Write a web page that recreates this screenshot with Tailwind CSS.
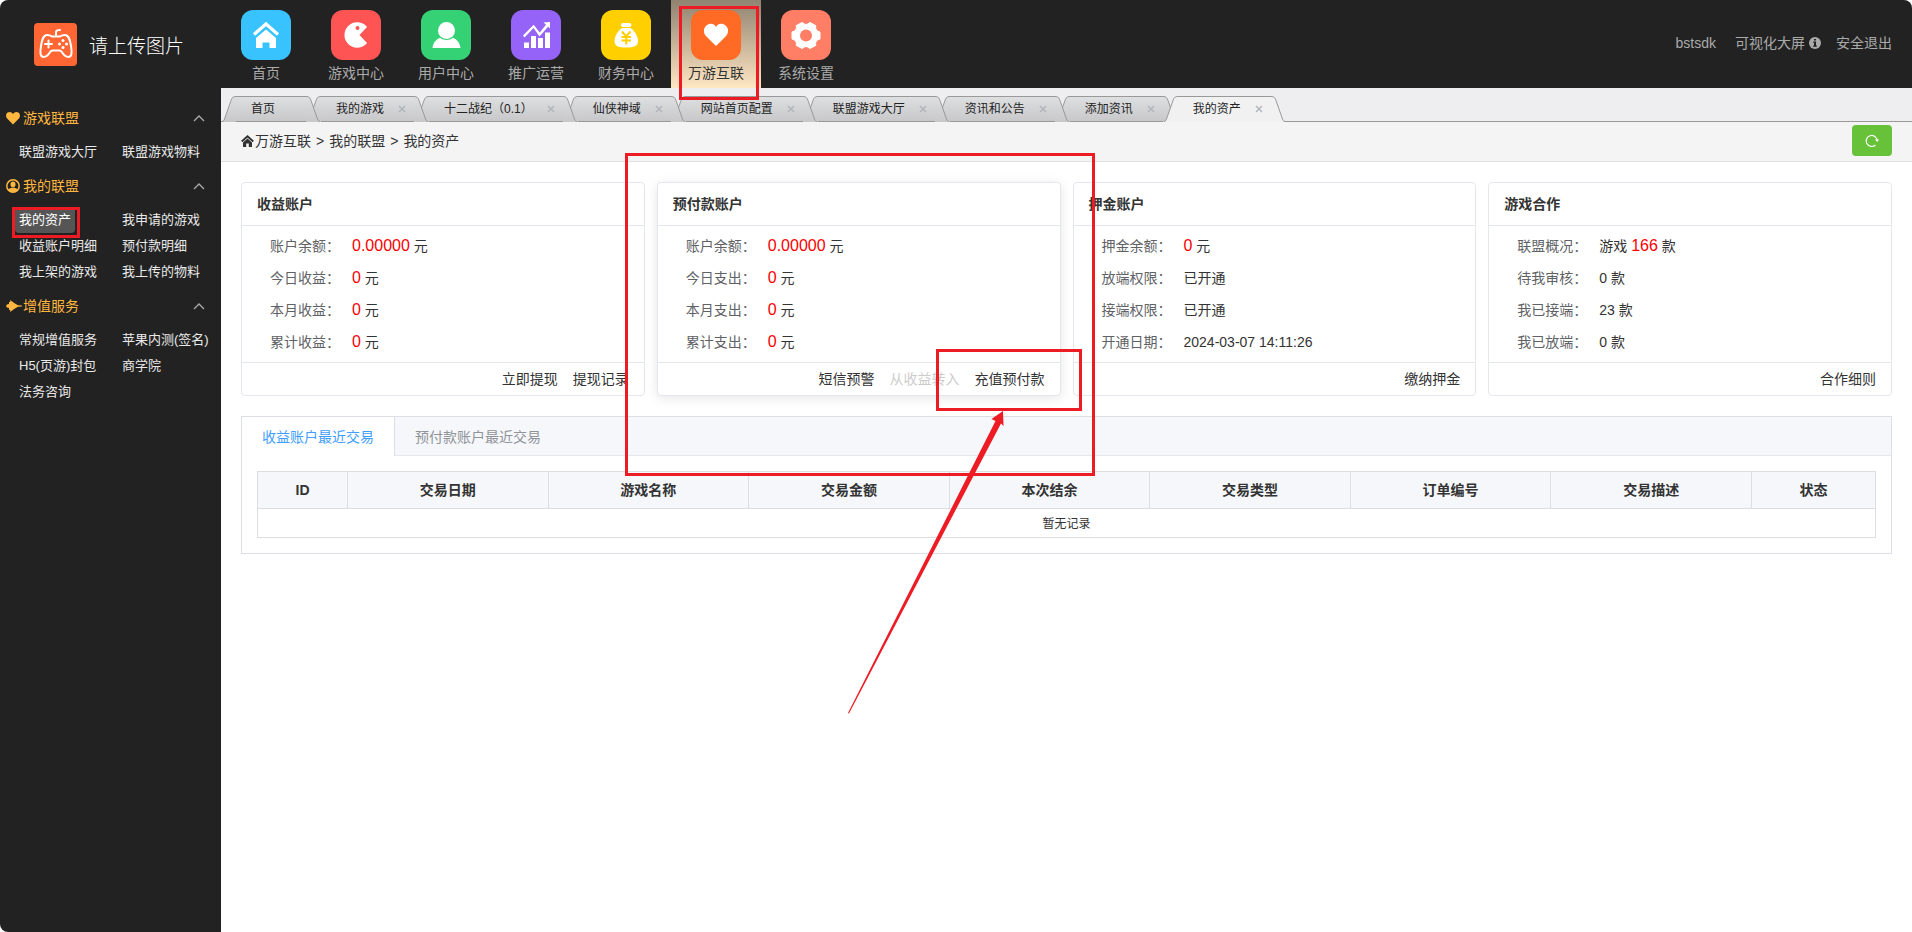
<!DOCTYPE html>
<html lang="zh-CN">
<head>
<meta charset="utf-8">
<meta name="viewport" content="width=device-width, initial-scale=1">
<title>我的资产</title>
<script src="https://cdn.jsdelivr.net/npm/@tailwindcss/browser@4"></script>
</head>
<body class="bg-white font-['Liberation_Sans','Noto_Sans_CJK_SC',sans-serif] text-sm text-[#333]">

<svg class="hidden" aria-hidden="true">
  <symbol id="edge-l" viewBox="0 0 14 26">
    <path d="M0 26 C1.5 25.5 2 24.5 2.5 23 L9 4.5 C10 1.5 11 .5 14 .5 V26Z" fill="url(#tabfill)"/>
    <path d="M0 25.5 C1.500 25 2 24.500 2.500 23 L9 4.500 C10 1.500 11 .5 14 .5" fill="none" stroke="#999"/>
  </symbol>
  <symbol id="edge-r" viewBox="0 0 14 26">
    <path d="M0 .5 C3 .5 4 1.500 5 4.500 L11.500 23 C12 24.500 12.500 25.500 14 26 H0Z" fill="url(#tabfill)"/>
    <path d="M0 .5 C3 .5 4 1.500 5 4.500 L11.500 23 C12 24.500 12.500 25 14 25.500" fill="none" stroke="#999"/>
  </symbol>
  <symbol id="edge-la" viewBox="0 0 14 26">
    <path d="M0 26 C1.500 25.500 2 24.500 2.500 23 L9 4.500 C10 1.500 11 .5 14 .5 V26Z" fill="#f1f1f2"/>
    <path d="M0 25.500 C1.500 25 2 24.500 2.500 23 L9 4.500 C10 1.500 11 .5 14 .5" fill="none" stroke="#999"/>
  </symbol>
  <symbol id="edge-ra" viewBox="0 0 14 26">
    <path d="M0 .5 C3 .5 4 1.500 5 4.500 L11.500 23 C12 24.500 12.500 25.500 14 26 H0Z" fill="#f1f1f2"/>
    <path d="M0 .5 C3 .5 4 1.500 5 4.500 L11.500 23 C12 24.500 12.500 25 14 25.500" fill="none" stroke="#999"/>
  </symbol>
  <symbol id="cross" viewBox="0 0 8 8"><path d="M1 1 L7 7 M7 1 L1 7" fill="none" stroke="#aeb4b9" stroke-width="1.4"/></symbol>
  <symbol id="chev" viewBox="0 0 12 8"><path d="M1 7 L6 2 L11 7" fill="none" stroke="#aaa" stroke-width="1.3"/></symbol>
</svg>
<svg class="absolute size-0" aria-hidden="true">
  <defs><linearGradient id="tabfill" gradientUnits="userSpaceOnUse" x1="0" y1="0" x2="0" y2="26"><stop stop-color="#dedfe0"/><stop offset="1" stop-color="#c8c8cb"/></linearGradient></defs>
</svg>

<div class="flex min-h-screen overflow-hidden rounded-lg">

  <aside class="w-[221px] shrink-0 bg-[#222]">
    <div class="flex h-[97px] items-start gap-3 pt-[23px] pl-[34px]">
      <svg class="size-[43px]" viewBox="0 0 43 43" fill="none" stroke="#fff" stroke-width="2" stroke-linecap="round" stroke-linejoin="round">
        <rect width="43" height="43" rx="4" fill="#ff6633" stroke="none"/>
        <path d="M22 12 V9 Q22 7 26 7"/>
        <path d="M13 12 Q16 12 18 13.500 H26 Q28 12 31 12 C35 12 36 17 37 23 C38 29 38 34 34.500 34 C31 34 29 31 27.500 28.500 Q26.500 27.500 25 27.500 H19 Q17.500 27.500 16.500 28.500 C15 31 13 34 9.500 34 C6 34 6 29 7 23 C8 17 9 12 13 12Z"/>
        <path d="M11 21 H18 M14.500 17.500 V24.500"/>
        <g fill="#fff" stroke="none"><circle cx="29" cy="17.500" r="1.500"/><circle cx="29" cy="24.500" r="1.500"/><circle cx="25.500" cy="21" r="1.500"/><circle cx="32.500" cy="21" r="1.500"/></g>
      </svg>
      <span class="text-[19px] leading-12 font-light text-white">请上传图片</span>
    </div>
    <nav aria-label="侧边菜单" class="text-[13px] leading-[26px] text-[#e9e9e9]">
      <button class="flex h-[42px] w-full items-center gap-[3px] pr-4 pl-[6px] text-sm text-[#ffb73f]">
        <svg class="size-[14px]" viewBox="0 0 14 14" fill="currentColor"><path d="M7 13.500 L.9 7.200 C-.6 5.200 0 2.500 1.700 1.500 C3.600 .4 5.800 1 7 3 C8.200 1 10.400 .4 12.300 1.500 C14 2.500 14.600 5.200 13.100 7.200Z"/></svg>
        <span class="mr-auto">游戏联盟</span>
        <svg class="h-2 w-3"><use href="#chev"/></svg>
      </button>
      <ul class="grid grid-cols-[103px_1fr] pl-[15px]">
        <li class="h-[26px]"><a href="#" class="inline-block px-1">联盟游戏大厅</a></li><li><a href="#" class="inline-block px-1">联盟游戏物料</a></li>
      </ul>
      <button class="flex h-[42px] w-full items-center gap-[3px] pr-4 pl-[6px] text-sm text-[#ffb73f]">
        <svg class="size-[14px]" viewBox="0 0 14 14"><circle cx="7" cy="7" r="6.200" fill="none" stroke="currentColor" stroke-width="1.500"/><ellipse cx="7" cy="5.400" rx="2.500" ry="2.800" fill="currentColor"/><path d="M2.500 10.800 C3.200 9 5 8.700 7 8.700 S10.800 9 11.500 10.800 L10 12.500 7 13 4 12.500Z" fill="currentColor"/></svg>
        <span class="mr-auto">我的联盟</span>
        <svg class="h-2 w-3"><use href="#chev"/></svg>
      </button>
      <ul class="grid grid-cols-[103px_1fr] pl-[15px]">
        <li class="relative h-[26px]"><a href="#" class="inline-block rounded bg-[#555] px-1 text-white">我的资产</a><div class="pointer-events-none absolute top-0 -left-[3px] h-[31px] w-[68px] border-3 border-[#ed1c24]"></div></li><li><a href="#" class="inline-block px-1">我申请的游戏</a></li>
        <li class="h-[26px]"><a href="#" class="inline-block px-1">收益账户明细</a></li><li><a href="#" class="inline-block px-1">预付款明细</a></li>
        <li class="h-[26px]"><a href="#" class="inline-block px-1">我上架的游戏</a></li><li><a href="#" class="inline-block px-1">我上传的物料</a></li>
      </ul>
      <button class="flex h-[42px] w-full items-center gap-px pr-4 pl-[6px] text-sm text-[#ffb73f]">
        <svg class="h-[14px] w-4" viewBox="0 0 16 14" fill="currentColor"><path d="M0 7 L1 5.500 L3 5 V3 H4.200 V1 L8.500 4.200 L12 6.200 L16 6.600 V7.400 L12 7.800 L8.500 9.800 L4.200 13 V11 H3 V9 L1 8.500Z"/></svg>
        <span class="mr-auto">增值服务</span>
        <svg class="h-2 w-3"><use href="#chev"/></svg>
      </button>
      <ul class="grid grid-cols-[103px_1fr] pl-[15px]">
        <li class="h-[26px]"><a href="#" class="inline-block px-1">常规增值服务</a></li><li><a href="#" class="inline-block px-1 whitespace-nowrap">苹果内测(签名)</a></li>
        <li class="h-[26px]"><a href="#" class="inline-block px-1">H5(页游)封包</a></li><li><a href="#" class="inline-block px-1">商学院</a></li>
        <li class="h-[26px]"><a href="#" class="inline-block px-1">法务咨询</a></li>
      </ul>
    </nav>
  </aside>

  <div class="flex min-w-0 flex-1 flex-col">
    <header class="flex h-22 justify-between bg-[#222] text-[#aaa]">
      <nav aria-label="主导航" class="flex leading-[26px]">
        <a href="#" class="flex w-[90px] flex-col items-center pt-[10px]">
          <svg class="size-[50px]" viewBox="0 0 50 50"><rect width="50" height="50" rx="12" fill="#38c3ff"/><path d="M13 24.500 L25 14 L37 24.500" fill="none" stroke="#fff" stroke-width="3.200"/><path d="M25 19.500 L35 28 V38 H28.500 V32.500 H21.500 V38 H15 V28Z" fill="#fff"/></svg>首页</a>
        <a href="#" class="flex w-[90px] flex-col items-center pt-[10px]">
          <svg class="size-[50px]" viewBox="0 0 50 50"><rect width="50" height="50" rx="12" fill="#ff5454"/><path d="M36 17 A12.700 12.700 0 1 0 36 33 L28.500 25Z" fill="#fff"/><circle cx="26.500" cy="18" r="2" fill="#ff5454"/></svg>游戏中心</a>
        <a href="#" class="flex w-[90px] flex-col items-center pt-[10px]">
          <svg class="size-[50px]" viewBox="0 0 50 50"><rect width="50" height="50" rx="12" fill="#34d175"/><circle cx="25.500" cy="20.500" r="8.500" fill="#fff"/><path d="M11.500 38 C12 33 15 29.500 19 27.800 C23 30.800 28 30.800 32 27.800 C36 29.500 39 33 39.500 38Z" fill="#fff"/></svg>用户中心</a>
        <a href="#" class="flex w-[90px] flex-col items-center pt-[10px]">
          <svg class="size-[50px]" viewBox="0 0 50 50"><rect width="50" height="50" rx="12" fill="#9563f7"/><path d="M13 32.500 H18 V38 H13Z M20 26 H25 V38 H20Z M27 28 H32 V38 H27Z M34 22.500 H39 V38 H34Z M32.500 12.500 L39 12 V18.500 L37 16.700 L28.500 26.500 L22.500 18 L13.500 27.500 L12 25.500 L22.700 14.700 L28.700 22.500 L35 14.800Z" fill="#fff"/></svg>推广运营</a>
        <a href="#" class="flex w-[90px] flex-col items-center pt-[10px]">
          <svg class="size-[50px]" viewBox="0 0 50 50"><rect width="50" height="50" rx="12" fill="#ffcf00"/><rect x="20" y="13" width="10.500" height="4" rx="2" fill="#fff"/><path d="M21 18 H29.500 C34 21 37 26.500 37 31 C37 36 33 37.500 25.200 37.500 S13.500 36 13.500 31 C13.500 26.500 16.500 21 21 18Z" fill="#fff"/><path d="M21 21.500 L25.200 26.500 L29.500 21.500 M20.500 27 H30 M20.500 30.500 H30 M25.200 26.500 V34.500" fill="none" stroke="#ffcf00" stroke-width="2"/></svg>财务中心</a>
        <a href="#" aria-current="page" class="relative flex w-[90px] flex-col items-center bg-linear-to-b from-[#918371] to-[#ffe7c3] pt-[10px] text-[#333]">
          <svg class="size-[50px]" viewBox="0 0 50 50"><rect width="50" height="50" rx="12" fill="#ff6a25"/><path d="M25 36 L14.500 25.500 C11.500 21.500 13 16 17.500 14.300 C20.500 13.200 23.500 14 25 17 C26.500 14 29.500 13.200 32.500 14.300 C37 16 38.500 21.500 35.500 25.500Z" fill="#fff"/></svg>万游互联
          <span class="pointer-events-none absolute top-[6px] left-2 z-30 h-[94px] w-20 border-3 border-[#ed1c24]"></span></a>
        <a href="#" class="flex w-[90px] flex-col items-center pt-[10px]">
          <svg class="size-[50px]" viewBox="0 0 50 50"><rect width="50" height="50" rx="12" fill="#ff7e65"/><path d="M28.800 12.400 L34.800 15.600 Q33.500 20.500 39 22 V29 Q33.500 30.500 34.800 35.400 L28.800 38.600 Q25 34.500 21.200 38.600 L15.200 35.400 Q16.500 30.500 11 29 V22 Q16.500 20.500 15.200 15.600 L21.200 12.400 Q25 16.500 28.800 12.400Z" fill="#fff" stroke="#fff" stroke-linejoin="round"/><circle cx="25" cy="25.500" r="6" fill="#ff7e65"/></svg>系统设置</a>
      </nav>
      <div class="flex h-[86px] items-center gap-[15px] pr-5">
        <a href="#" class="mr-1">bstsdk</a>
        <a href="#" class="flex items-center gap-1">可视化大屏<svg class="size-3" viewBox="0 0 12 12"><circle cx="6" cy="6" r="6" fill="#aaa"/><path d="M5 2 H7 V3.600 H5Z M4.200 4.600 H7 V8.600 H7.800 V9.800 H4.200 V8.600 H5 V5.800 H4.200Z" fill="#222"/></svg></a>
        <a href="#">安全退出</a>
      </div>
    </header>

    <div class="flex h-[34px] items-end border-b border-[#999] bg-[#eeeef0] pl-px text-xs text-[#222]">
      <div class="relative z-9 -mr-[13px] flex h-[26px] translate-y-px">
        <svg class="h-[26px] w-[14px]"><use href="#edge-l"/></svg>
        <div class="flex items-center border-y border-[#999] bg-linear-to-b from-[#dedfe0] to-[#c8c8cb] pr-[31px] pl-[15px]"><button>首页</button></div>
        <svg class="h-[26px] w-[14px]"><use href="#edge-r"/></svg>
      </div>
      <div class="relative z-8 -mr-[13px] flex h-[26px] translate-y-px">
        <svg class="h-[26px] w-[14px]"><use href="#edge-l"/></svg>
        <div class="flex items-center gap-[14px] border-y border-[#999] bg-linear-to-b from-[#dedfe0] to-[#c8c8cb] pr-2 pl-[15px]"><button>我的游戏</button><button aria-label="关闭"><svg class="size-2"><use href="#cross"/></svg></button></div>
        <svg class="h-[26px] w-[14px]"><use href="#edge-r"/></svg>
      </div>
      <div class="relative z-7 -mr-[13px] flex h-[26px] translate-y-px">
        <svg class="h-[26px] w-[14px]"><use href="#edge-l"/></svg>
        <div class="flex items-center gap-[14px] border-y border-[#999] bg-linear-to-b from-[#dedfe0] to-[#c8c8cb] pr-2 pl-[15px]"><button>十二战纪（0.1）</button><button aria-label="关闭"><svg class="size-2"><use href="#cross"/></svg></button></div>
        <svg class="h-[26px] w-[14px]"><use href="#edge-r"/></svg>
      </div>
      <div class="relative z-6 -mr-[13px] flex h-[26px] translate-y-px">
        <svg class="h-[26px] w-[14px]"><use href="#edge-l"/></svg>
        <div class="flex items-center gap-[14px] border-y border-[#999] bg-linear-to-b from-[#dedfe0] to-[#c8c8cb] pr-2 pl-[15px]"><button>仙侠神域</button><button aria-label="关闭"><svg class="size-2"><use href="#cross"/></svg></button></div>
        <svg class="h-[26px] w-[14px]"><use href="#edge-r"/></svg>
      </div>
      <div class="relative z-5 -mr-[13px] flex h-[26px] translate-y-px">
        <svg class="h-[26px] w-[14px]"><use href="#edge-l"/></svg>
        <div class="flex items-center gap-[14px] border-y border-[#999] bg-linear-to-b from-[#dedfe0] to-[#c8c8cb] pr-2 pl-[15px]"><button>网站首页配置</button><button aria-label="关闭"><svg class="size-2"><use href="#cross"/></svg></button></div>
        <svg class="h-[26px] w-[14px]"><use href="#edge-r"/></svg>
      </div>
      <div class="relative z-4 -mr-[13px] flex h-[26px] translate-y-px">
        <svg class="h-[26px] w-[14px]"><use href="#edge-l"/></svg>
        <div class="flex items-center gap-[14px] border-y border-[#999] bg-linear-to-b from-[#dedfe0] to-[#c8c8cb] pr-2 pl-[15px]"><button>联盟游戏大厅</button><button aria-label="关闭"><svg class="size-2"><use href="#cross"/></svg></button></div>
        <svg class="h-[26px] w-[14px]"><use href="#edge-r"/></svg>
      </div>
      <div class="relative z-3 -mr-[13px] flex h-[26px] translate-y-px">
        <svg class="h-[26px] w-[14px]"><use href="#edge-l"/></svg>
        <div class="flex items-center gap-[14px] border-y border-[#999] bg-linear-to-b from-[#dedfe0] to-[#c8c8cb] pr-2 pl-[15px]"><button>资讯和公告</button><button aria-label="关闭"><svg class="size-2"><use href="#cross"/></svg></button></div>
        <svg class="h-[26px] w-[14px]"><use href="#edge-r"/></svg>
      </div>
      <div class="relative z-2 -mr-[13px] flex h-[26px] translate-y-px">
        <svg class="h-[26px] w-[14px]"><use href="#edge-l"/></svg>
        <div class="flex items-center gap-[14px] border-y border-[#999] bg-linear-to-b from-[#dedfe0] to-[#c8c8cb] pr-2 pl-[15px]"><button>添加资讯</button><button aria-label="关闭"><svg class="size-2"><use href="#cross"/></svg></button></div>
        <svg class="h-[26px] w-[14px]"><use href="#edge-r"/></svg>
      </div>
      <div class="relative z-10 flex h-[26px] translate-y-px">
        <svg class="h-[26px] w-[14px]"><use href="#edge-la"/></svg>
        <div class="flex items-center gap-[14px] border-y border-t-[#999] border-b-[#f1f1f2] bg-[#f1f1f2] pr-2 pl-[15px]"><button aria-current="page">我的资产</button><button aria-label="关闭"><svg class="size-2"><use href="#cross"/></svg></button></div>
        <svg class="h-[26px] w-[14px]"><use href="#edge-ra"/></svg>
      </div>
    </div>

    <div class="flex h-10 items-center justify-between border-b border-[#e2e2e2] bg-[#f4f4f4] px-5 pb-[2px]">
      <nav aria-label="面包屑" class="flex items-center">
        <svg class="mr-px h-3 w-[13px]" viewBox="0 0 13 12" fill="none"><path d="M.7 6.500 L6.500 1.300 L12.300 6.500" stroke="#333" stroke-width="1.900"/><path d="M6.500 3.500 L11 7.500 V12 H7.800 V8.500 H5.200 V12 H2 V7.500Z" fill="#333"/></svg>
        <a href="#">万游互联</a><span class="px-[5px]">&gt;</span><a href="#">我的联盟</a><span class="px-[5px]">&gt;</span><span>我的资产</span>
      </nav>
      <button aria-label="刷新" class="flex h-[31px] w-10 items-center justify-center rounded bg-[#67c23a]">
        <svg class="size-[14px]" viewBox="0 0 14 14" fill="none"><path d="M12.200 6.500 A5.500 5.500 0 1 0 10.500 11" stroke="#fff" stroke-width="1.200"/><path d="M10 5.500 H14 L12.200 8Z" fill="#fff"/></svg>
      </button>
    </div>

    <main class="flex-1 px-5 pt-5">
      <div class="grid grid-cols-4 gap-3 leading-8">
        <section class="rounded border border-[#e4e7ed] bg-white">
          <h2 class="border-b border-[#e4e7ed] px-[15px] leading-[42px] font-bold">收益账户</h2>
          <dl class="grid grid-cols-[82px_1fr] py-1 pl-7">
            <dt class="text-[#606266]">账户余额：</dt><dd><span class="text-base leading-8 text-[#f00]">0.00000</span> 元</dd>
            <dt class="text-[#606266]">今日收益：</dt><dd><span class="text-base leading-8 text-[#f00]">0</span> 元</dd>
            <dt class="text-[#606266]">本月收益：</dt><dd><span class="text-base leading-8 text-[#f00]">0</span> 元</dd>
            <dt class="text-[#606266]">累计收益：</dt><dd><span class="text-base leading-8 text-[#f00]">0</span> 元</dd>
          </dl>
          <div class="flex justify-end gap-[15px] border-t border-[#e4e7ed] px-[15px]"><a href="#">立即提现</a><a href="#">提现记录</a></div>
        </section>
        <section class="relative z-20 rounded border border-[#e4e7ed] bg-white shadow-[0_2px_12px_rgba(0,0,0,0.1)]">
          <h2 class="border-b border-[#e4e7ed] px-[15px] leading-[42px] font-bold">预付款账户</h2>
          <dl class="grid grid-cols-[82px_1fr] py-1 pl-7">
            <dt class="text-[#606266]">账户余额：</dt><dd><span class="text-base leading-8 text-[#f00]">0.00000</span> 元</dd>
            <dt class="text-[#606266]">今日支出：</dt><dd><span class="text-base leading-8 text-[#f00]">0</span> 元</dd>
            <dt class="text-[#606266]">本月支出：</dt><dd><span class="text-base leading-8 text-[#f00]">0</span> 元</dd>
            <dt class="text-[#606266]">累计支出：</dt><dd><span class="text-base leading-8 text-[#f00]">0</span> 元</dd>
          </dl>
          <div class="flex justify-end gap-[15px] border-t border-[#e4e7ed] px-[15px]"><a href="#">短信预警</a><span class="text-[#ccc]">从收益转入</span><a href="#">充值预付款</a></div>
          <div class="pointer-events-none absolute -top-[30px] -right-[35px] -left-[33px] h-[323px] border-3 border-[#ed1c24]"></div>
          <div class="pointer-events-none absolute top-[166px] -right-[22px] h-[62px] w-[146px] border-3 border-[#ed1c24]"></div>
          <svg class="pointer-events-none absolute top-[228px] right-[52px] h-[304px] w-40" viewBox="0 0 160 304" fill="#ed1c24"><path d="M155 0 L143.500 8 L147.500 10 L0 302 L1 302.500 L153 12.500 L155.500 15Z"/></svg>
        </section>
        <section class="rounded border border-[#e4e7ed] bg-white">
          <h2 class="border-b border-[#e4e7ed] px-[15px] leading-[42px] font-bold">押金账户</h2>
          <dl class="grid grid-cols-[82px_1fr] py-1 pl-7">
            <dt class="text-[#606266]">押金余额：</dt><dd><span class="text-base leading-8 text-[#f00]">0</span> 元</dd>
            <dt class="text-[#606266]">放端权限：</dt><dd>已开通</dd>
            <dt class="text-[#606266]">接端权限：</dt><dd>已开通</dd>
            <dt class="text-[#606266]">开通日期：</dt><dd>2024-03-07 14:11:26</dd>
          </dl>
          <div class="flex justify-end gap-[15px] border-t border-[#e4e7ed] px-[15px]"><a href="#">缴纳押金</a></div>
        </section>
        <section class="rounded border border-[#e4e7ed] bg-white">
          <h2 class="border-b border-[#e4e7ed] px-[15px] leading-[42px] font-bold">游戏合作</h2>
          <dl class="grid grid-cols-[82px_1fr] py-1 pl-7">
            <dt class="text-[#606266]">联盟概况：</dt><dd>游戏 <span class="text-base leading-8 text-[#f00]">166</span> 款</dd>
            <dt class="text-[#606266]">待我审核：</dt><dd>0 款</dd>
            <dt class="text-[#606266]">我已接端：</dt><dd>23 款</dd>
            <dt class="text-[#606266]">我已放端：</dt><dd>0 款</dd>
          </dl>
          <div class="flex justify-end gap-[15px] border-t border-[#e4e7ed] px-[15px]"><a href="#">合作细则</a></div>
        </section>
      </div>

      <section class="mt-5 border border-[#dcdfe6]">
        <div role="tablist" class="flex border-b border-[#e4e7ed] bg-[#f5f7fa]">
          <button role="tab" aria-selected="true" class="-mb-px h-[39px] border-r border-[#dcdfe6] bg-white px-5 text-[#409eff]">收益账户最近交易</button>
          <button role="tab" aria-selected="false" class="-mb-px h-[39px] px-5 text-[#909399]">预付款账户最近交易</button>
        </div>
        <div class="p-[15px]">
          <table class="w-full table-fixed border-collapse text-center">
            <colgroup><col class="w-[90px]"><col><col><col><col><col><col><col><col class="w-[124px]"></colgroup>
            <thead class="bg-[#f5f7fa]">
              <tr class="h-[37px]">
                <th class="border border-[#dcdee2]">ID</th><th class="border border-[#dcdee2]">交易日期</th><th class="border border-[#dcdee2]">游戏名称</th><th class="border border-[#dcdee2]">交易金额</th><th class="border border-[#dcdee2]">本次结余</th><th class="border border-[#dcdee2]">交易类型</th><th class="border border-[#dcdee2]">订单编号</th><th class="border border-[#dcdee2]">交易描述</th><th class="border border-[#dcdee2]">状态</th>
              </tr>
            </thead>
            <tbody><tr class="h-[29px]"><td colspan="9" class="border border-[#dcdee2] pt-[2px] text-xs">暂无记录</td></tr></tbody>
          </table>
        </div>
      </section>
    </main>
  </div>
</div>
</body>
</html>
